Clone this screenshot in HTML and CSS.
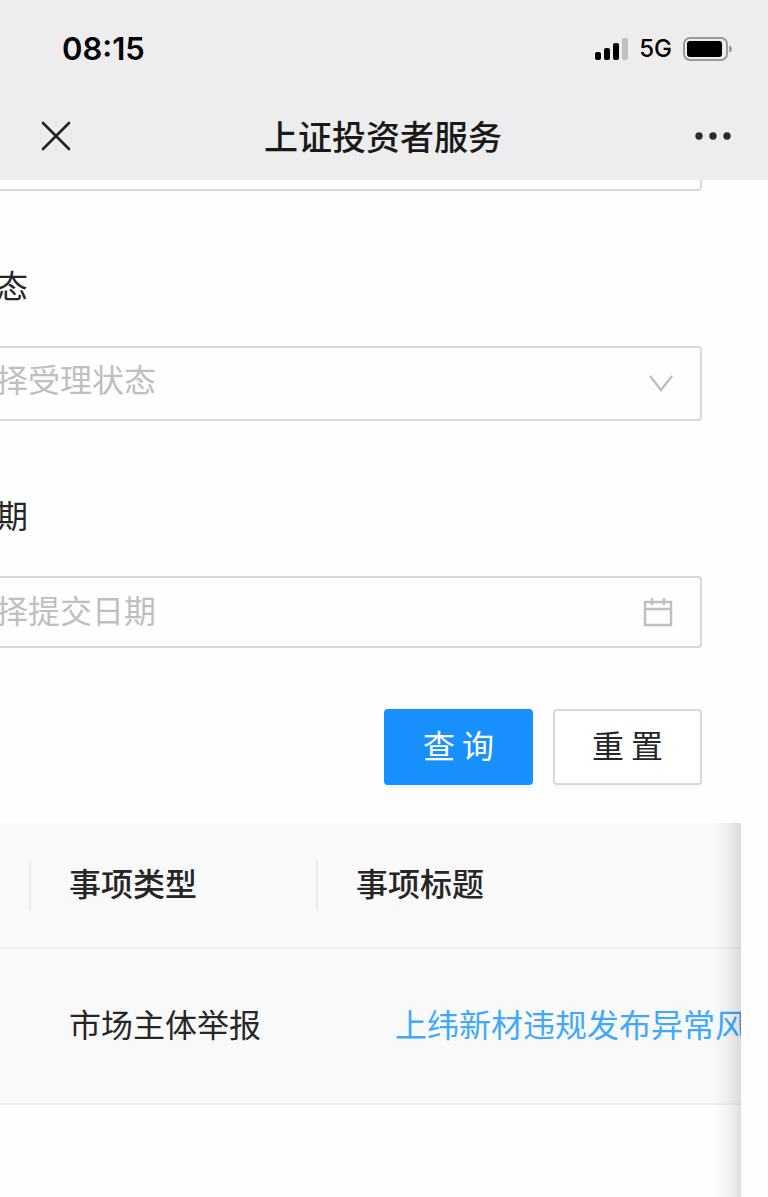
FILE: index.html
```
<!DOCTYPE html>
<html lang="zh-CN">
<head>
  <meta charset="UTF-8">
  <meta name="viewport" content="width=device-width, initial-scale=1">
  <title>上证投资者服务</title>
  <link rel="stylesheet" href="styles.css">
</head>
<body>
  <header class="header">
    <div class="status-bar">
      <span class="time">08:15</span>
      <div class="status-icons">
        <svg width="34" height="24" viewBox="0 0 34 24" aria-hidden="true">
          <rect x="1" y="15" width="6" height="8" rx="2"/>
          <rect x="10" y="11" width="6" height="12" rx="2"/>
          <rect x="19" y="6" width="6" height="17" rx="2"/>
          <rect x="28" y="1" width="6" height="22" rx="2" fill="#c0c0c0"/>
        </svg>
        <span class="network">5G</span>
        <svg width="50" height="24" viewBox="0 0 50 24" aria-hidden="true">
          <rect x="1" y="1" width="43" height="22" rx="6" fill="none" stroke="#9a9a9a" stroke-width="2"/>
          <rect x="4" y="4" width="35" height="16" rx="3"/>
          <path d="M46 8.5c4 1 4 6 0 7z" fill="#9a9a9a"/>
        </svg>
      </div>
    </div>
    <div class="nav-bar">
      <button type="button" class="icon-btn" aria-label="关闭">
        <svg width="30" height="30" viewBox="0 0 30 30" fill="none" stroke="#222" stroke-width="2.6" stroke-linecap="round">
          <path d="M2 2l26 26M28 2L2 28"/>
        </svg>
      </button>
      <h1>上证投资者服务</h1>
      <button type="button" class="icon-btn" aria-label="更多">
        <svg width="36" height="8" viewBox="0 0 36 8" fill="#2b2b2b">
          <circle cx="4" cy="4" r="3.7"/>
          <circle cx="18" cy="4" r="3.7"/>
          <circle cx="32" cy="4" r="3.7"/>
        </svg>
      </button>
    </div>
  </header>

  <main class="content">
    <form class="search-form">
      <div class="field-end"></div>

      <label for="state">态</label>
      <div class="field">
        <select id="state">
          <option>择受理状态</option>
        </select>
        <svg width="24" height="18" viewBox="0 0 24 18" fill="none" stroke="#bfbfbf" stroke-width="2.4">
          <path d="M1 1l11 14L23 1"/>
        </svg>
      </div>

      <label for="date">期</label>
      <div class="field date-field">
        <input type="text" id="date" placeholder="择提交日期">
        <svg width="30" height="30" viewBox="0 0 30 30" fill="none" stroke="#bfbfbf" stroke-width="2.4">
          <path d="M2 5h26v23H2zM2 12h26M9 1v7M21 1v7"/>
        </svg>
      </div>

      <div class="actions">
        <button type="button" class="btn btn-primary">查 询</button>
        <button type="button" class="btn">重 置</button>
      </div>
    </form>

    <div class="table-wrap">
      <table>
        <thead>
          <tr>
            <th class="col-id"></th>
            <th class="col-type"><span>事项类型</span></th>
            <th><span>事项标题</span></th>
          </tr>
        </thead>
        <tbody>
          <tr>
            <td></td>
            <td>市场主体举报</td>
            <td class="title-cell"><a href="#">上纬新材违规发布异常风</a></td>
          </tr>
        </tbody>
      </table>
    </div>
  </main>
</body>
</html>
```
FILE: styles.css
```
* {
  box-sizing: border-box;
}

body {
  margin: 0;
  min-height: 100vh;
  display: flex;
  flex-direction: column;
  background: #fefefe;
  color: #262626;
  font-family: "Noto Sans CJK SC", sans-serif;
  font-size: 32px;
  line-height: 48px;
  overflow-x: hidden;
}

.header {
  background: #ededed;
  height: 180px;
}

.status-bar {
  display: flex;
  justify-content: space-between;
  align-items: center;
  height: 98px;
  padding: 0 35px 0 62px;
  color: #000;
  font-family: Inter, sans-serif;
}

.time {
  font-size: 31px;
  font-weight: 600;
}

.status-icons {
  display: flex;
  align-items: center;
  gap: 11px;
}

.network {
  font-size: 24px;
  font-weight: 500;
}

.nav-bar {
  display: flex;
  justify-content: space-between;
  align-items: center;
  height: 76px;
  padding: 0 37px 0 41px;
}

.icon-btn {
  display: flex;
  padding: 0;
  border: none;
  background: none;
  cursor: pointer;
}

h1 {
  margin: 0;
  color: #1a1a1a;
  font-size: 34px;
  font-weight: 500;
}

.content {
  flex: 1;
  display: flex;
  flex-direction: column;
  margin-left: -4px;
}

.search-form {
  margin-right: 66px;
}

.field-end {
  height: 11px;
  border: 2px solid #d9d9d9;
  border-width: 0 2px 2px 0;
  border-radius: 0 0 4px 0;
}

label {
  display: block;
  margin-top: 69px;
  margin-bottom: 38px;
}

.field {
  display: flex;
  align-items: center;
  height: 75px;
  padding-right: 27px;
  border: 2px solid #d9d9d9;
  border-left: none;
  border-radius: 0 4px 4px 0;
}

.date-field {
  height: 72px;
}

.field select,
.field input {
  flex: 1;
  min-width: 0;
  height: 60px;
  padding: 0 0 6px;
  border: none;
  outline: none;
  background: none;
  color: #bfbfbf;
  font: inherit;
  appearance: none;
}

.field select {
  padding-bottom: 12px;
}

.field input::placeholder {
  color: #bfbfbf;
}

.actions {
  display: flex;
  justify-content: flex-end;
  gap: 20px;
  margin-top: 61px;
}

.btn {
  width: 149px;
  height: 76px;
  padding: 0 0 6px;
  border: 2px solid #d9d9d9;
  border-radius: 4px;
  background: #fff;
  color: #262626;
  font: inherit;
  box-shadow: 0 4px 2px rgba(0, 0, 0, 0.02);
  cursor: pointer;
}

.btn-primary {
  border-color: #1890ff;
  background: #1890ff;
  color: #fff;
  box-shadow: 0 4px 2px rgba(0, 0, 0, 0.04);
}

.table-wrap {
  position: relative;
  flex: 1;
  margin-top: 38px;
  margin-right: 27px;
  overflow: hidden;
}

/* shadow where the table scrolls under the right edge */
.table-wrap::after {
  content: "";
  position: absolute;
  top: 0;
  right: 0;
  bottom: 0;
  width: 28px;
  background: linear-gradient(to left, rgba(0, 0, 0, 0.12), rgba(0, 0, 0, 0.04) 50%, transparent);
  pointer-events: none;
}

table {
  width: 100%;
  table-layout: fixed;
  border-collapse: separate;
  border-spacing: 0;
  background: #f9f9f9;
}

th,
td {
  padding: 0 0 0 40px;
  border-bottom: 2px solid #f0f0f0;
  text-align: left;
  white-space: nowrap;
}

th {
  height: 126px;
  padding-left: 0;
  font-weight: 500;
}

th span {
  display: block;
  padding: 0 0 6px 38px;
  border-left: 2px solid #ebebeb;
  line-height: 44px;
}

td {
  height: 156px;
  padding-bottom: 6px;
}

.col-id {
  width: 33px;
}

.col-type {
  width: 287px;
}

td.title-cell {
  padding-left: 79px;
}

td:first-child {
  padding: 0;
}

a {
  color: #40a9ff;
  text-decoration: none;
}
```
